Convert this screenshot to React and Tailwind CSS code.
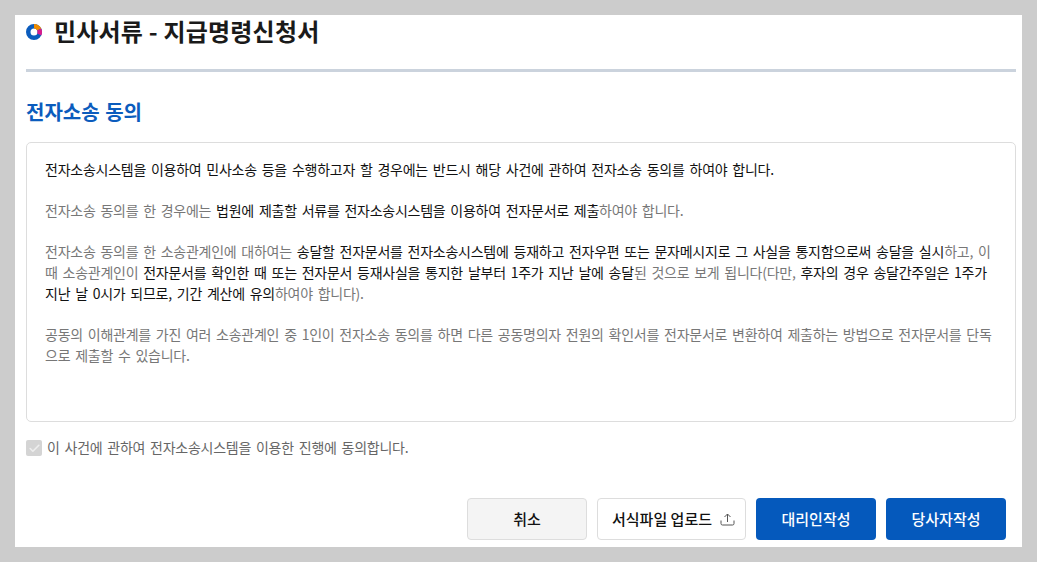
import { Check } from "lucide-react";

const font = { fontFamily: '"Noto Sans CJK KR", sans-serif' };

function Logo() {
  return (
    <svg width="16" height="16" viewBox="0 0 16 16" className="shrink-0">
      <circle cx="8" cy="8" r="5.75" fill="none" stroke="#0b5cbd" strokeWidth="4.500" />
      <path d="M8 2.250A5.750 5.750 0 0 1 13.200 5.570" fill="none" stroke="#f08c00" strokeWidth="4.500" />
      <path d="M13.200 5.570A5.750 5.750 0 0 1 13.200 10.430" fill="none" stroke="#d81b8c" strokeWidth="4.500" />
    </svg>
  );
}

function UploadIcon() {
  return (
    <svg width="15" height="13" viewBox="0 0 15 13" fill="none" stroke="#555" strokeWidth="1" className="shrink-0">
      <path d="M1 7.500v3a1.500 1.500 0 0 0 1.500 1.500h10a1.500 1.500 0 0 0 1.500-1.500v-3" />
      <path d="M7.500 9V1M4.500 4l3-3 3 3" />
    </svg>
  );
}

export default function App() {
  return (
    <div className="h-[562px] w-[1037px] overflow-hidden bg-[#cccccc] pt-[15px] pl-[15px]" style={font}>
      <div className="flex h-[532px] w-[1007px] flex-col bg-white pr-[6px] pl-[11px]">
        <div className="flex h-[34px] items-center gap-[12px]">
          <Logo />
          <h1 className="-mt-[2px] text-[24px] leading-[34px] font-bold tracking-[0.2px] text-[#1a1a1a]">민사서류 - 지급명령신청서</h1>
        </div>
        <div className="mt-[20px] h-[3px] bg-[#cbd3dd]" />
        <h2 className="mt-[26px] text-[20px] leading-[28px] font-bold text-[#0b5cbd] [word-spacing:1px]">전자소송 동의</h2>
        <div className="mt-[16px] h-[280px] rounded-[5px] border border-[#dddddd] pt-[16px] pr-[18px] pl-[18px] text-[14px] leading-[21px] tracking-[-0.25px] text-[#777777] [word-spacing:2px]">
          <p className="text-[#111111]">전자소송시스템을 이용하여 민사소송 등을 수행하고자 할 경우에는 반드시 해당 사건에 관하여 전자소송 동의를 하여야 합니다.</p>
          <p className="mt-[20px]">
            전자소송 동의를 한 경우에는 <span className="text-[#111111]">법원에 제출할 서류를 전자소송시스템을 이용하여 전자문서로 제출</span>하여야 합니다.
          </p>
          <p className="mt-[20px]">
            전자소송 동의를 한 소송관계인에 대하여는 <span className="text-[#111111]">송달할 전자문서를 전자소송시스템에 등재하고 전자우편 또는 문자메시지로 그 사실을 통지함으로써 송달을 실시</span>하고, 이 때 소송관계인이 <span className="text-[#111111]">전자문서를 확인한 때 또는 전자문서 등재사실을 통지한 날부터 1주가 지난 날에 송달</span>된 것으로 보게 됩니다(다만, <span className="text-[#111111]">후자의 경우 송달간주일은 1주가 지난 날 0시가 되므로, 기간 계산에 유의</span>하여야 합니다).
          </p>
          <p className="mt-[20px]">공동의 이해관계를 가진 여러 소송관계인 중 1인이 전자소송 동의를 하면 다른 공동명의자 전원의 확인서를 전자문서로 변환하여 제출하는 방법으로 전자문서를 단독으로 제출할 수 있습니다.</p>
        </div>
        <div className="mt-[16px] flex h-[20px] items-center gap-[5px]">
          <span className="flex h-[16px] w-[16px] items-center justify-center rounded-[2px] bg-[#d4d4d4]">
            <Check size={13} strokeWidth={3} color="#eeeeee" />
          </span>
          <span className="-mt-[2px] text-[14px] tracking-[-0.25px] text-[#666666] [word-spacing:2px]">이 사건에 관하여 전자소송시스템을 이용한 진행에 동의합니다.</span>
        </div>
        <div className="mt-[40px] flex justify-end gap-[10px] pr-[10px]">
          <button className="h-[42px] w-[120px] rounded-[4px] border border-[#dddddd] bg-[#f4f4f4] text-[15px] font-medium text-[#111111]">취소</button>
          <button className="flex h-[42px] w-[149px] items-center gap-[8px] rounded-[4px] border border-[#dddddd] bg-white pl-[14px] text-[15px] font-medium text-[#111111]">
            서식파일 업로드
            <UploadIcon />
          </button>
          <button className="h-[42px] w-[120px] rounded-[4px] bg-[#0559bc] text-[15px] font-medium text-white">대리인작성</button>
          <button className="h-[42px] w-[120px] rounded-[4px] bg-[#0559bc] text-[15px] font-medium text-white">당사자작성</button>
        </div>
      </div>
    </div>
  );
}
